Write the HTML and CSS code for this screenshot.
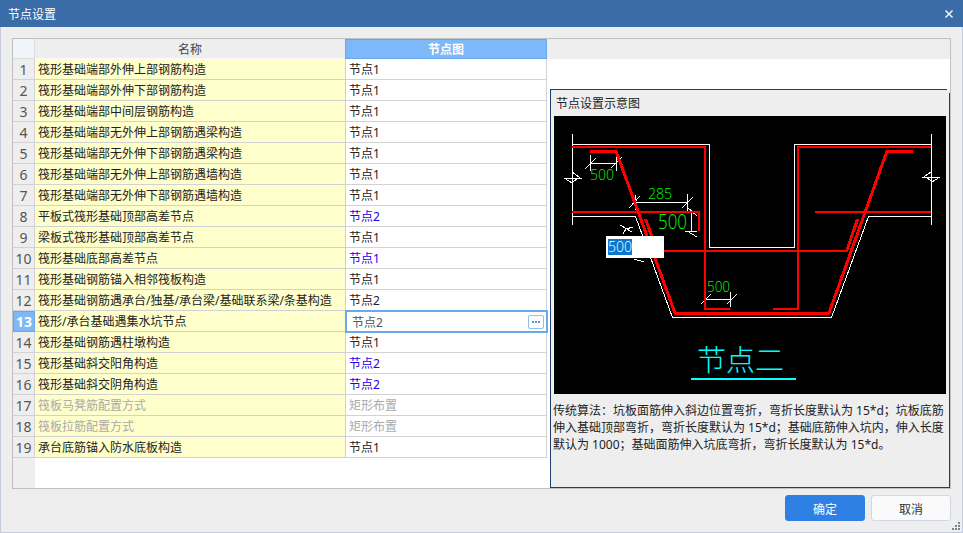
FILE: index.html
```html
<!DOCTYPE html>
<html lang="zh">
<head>
<meta charset="utf-8">
<title>节点设置</title>
<link rel="stylesheet" href="styles.css">
</head>
<body>
<div class="dialog">
  <header class="titlebar">
    <span class="title">节点设置</span>
    <svg class="close" width="8" height="8" viewBox="0 0 8 8"><path d="M0.5 0.5L7.5 7.5M7.5 0.5L0.5 7.5" stroke="#fff" stroke-width="1.4" fill="none"/></svg>
  </header>
  <main class="content">
    <div class="frame">
      <div class="grid">
        <div class="cell corner"></div>
        <div class="cell head">名称</div>
        <div class="cell head head-active">节点图</div>

        <div class="cell num">1</div><div class="cell name">筏形基础端部外伸上部钢筋构造</div><div class="cell val">节点1</div>
        <div class="cell num">2</div><div class="cell name">筏形基础端部外伸下部钢筋构造</div><div class="cell val">节点1</div>
        <div class="cell num">3</div><div class="cell name">筏形基础端部中间层钢筋构造</div><div class="cell val">节点1</div>
        <div class="cell num">4</div><div class="cell name">筏形基础端部无外伸上部钢筋遇梁构造</div><div class="cell val">节点1</div>
        <div class="cell num">5</div><div class="cell name">筏形基础端部无外伸下部钢筋遇梁构造</div><div class="cell val">节点1</div>
        <div class="cell num">6</div><div class="cell name">筏形基础端部无外伸上部钢筋遇墙构造</div><div class="cell val">节点1</div>
        <div class="cell num">7</div><div class="cell name">筏形基础端部无外伸下部钢筋遇墙构造</div><div class="cell val">节点1</div>
        <div class="cell num">8</div><div class="cell name">平板式筏形基础顶部高差节点</div><div class="cell val changed">节点2</div>
        <div class="cell num">9</div><div class="cell name">梁板式筏形基础顶部高差节点</div><div class="cell val">节点1</div>
        <div class="cell num">10</div><div class="cell name">筏形基础底部高差节点</div><div class="cell val changed">节点1</div>
        <div class="cell num">11</div><div class="cell name">筏形基础钢筋锚入相邻筏板构造</div><div class="cell val">节点1</div>
        <div class="cell num">12</div><div class="cell name">筏形基础钢筋遇承台/独基/承台梁/基础联系梁/条基构造</div><div class="cell val">节点2</div>
        <div class="cell num num-active">13</div><div class="cell name">筏形/承台基础遇集水坑节点</div>
        <div class="cell val editing"><span>节点2</span><span class="more"><i></i><i></i><i></i></span></div>
        <div class="cell num">14</div><div class="cell name">筏形基础钢筋遇柱墩构造</div><div class="cell val">节点1</div>
        <div class="cell num">15</div><div class="cell name">筏形基础斜交阳角构造</div><div class="cell val changed">节点2</div>
        <div class="cell num">16</div><div class="cell name">筏形基础斜交阴角构造</div><div class="cell val changed">节点2</div>
        <div class="cell num">17</div><div class="cell name muted">筏板马凳筋配置方式</div><div class="cell val muted">矩形布置</div>
        <div class="cell num">18</div><div class="cell name muted">筏板拉筋配置方式</div><div class="cell val muted">矩形布置</div>
        <div class="cell num">19</div><div class="cell name">承台底筋锚入防水底板构造</div><div class="cell val">节点1</div>
        <div class="cell-rest"></div>
      </div>
      <aside class="side">
        <div class="side-head"></div>
        <div class="side-gap"></div>
        <section class="panel">
          <div class="panel-line"></div>
          <div class="panel-body">
            <div class="panel-title">节点设置示意图</div>
            <svg class="drawing" width="392" height="278" viewBox="554 116 392 278">
              <g class="white">
                <path d="M572.5 134V225M931.5 134V225"/>
                <path d="M572 144.5H709.5V247.5H794.5V144.5H931"/>
                <path d="M572 216.5H635.5L672.5 317.5H831.5L868.5 216.5H931"/>
                <path d="M572 172L581 178.5H565L572 183L577 178.5"/>
                <path d="M931 172L923 177.5H939L932 182L927 177.5"/>
                <path d="M590.5 155V171M616 157V171M590 163.5H616M585 169L596 158M611 168L622 157"/>
                <path d="M635.5 195V210M687.5 194V212M635 202.5H687M629 208L640 196M682 208L693 197"/>
                <path d="M691.5 210V231M685 231.5H697M687 207L697 216M687 231L697 237"/>
                <path d="M705 299.5H730M730.5 292V307M701 304L711 294M727 304L737 294"/>
                <path d="M620 225L632 232M626 229L623 234M626 229L633 227"/>
                <path d="M634 259L644 262"/>
              </g>
              <g class="red">
                <path d="M572 147H705V309H730"/>
                <path d="M931 147H798V309H773"/>
                <path d="M572 212H699V231"/>
                <path d="M656 251H848"/>
                <path d="M815 212H931"/>
              </g>
              <g class="red thick">
                <path d="M590 151H616L675 313H829L887 151H913"/>
                <path d="M645.5 219L657 251M857.5 219L847 250"/>
              </g>
              <text class="dim" x="590" y="180" textLength="24" lengthAdjust="spacingAndGlyphs">500</text>
              <text class="dim" x="648" y="199" textLength="24" lengthAdjust="spacingAndGlyphs">285</text>
              <text class="dim large" x="658" y="229" textLength="29" lengthAdjust="spacingAndGlyphs">500</text>
              <text class="dim" x="707" y="292" textLength="23" lengthAdjust="spacingAndGlyphs">500</text>
              <rect x="606" y="236" width="58" height="22" fill="#fff"/>
              <rect x="608" y="239" width="24" height="16" fill="#0b78d0"/>
              <text class="selected" x="608" y="252" textLength="24" lengthAdjust="spacingAndGlyphs">500</text>
              <text class="node-title" x="697" y="371">节点二</text>
              <rect x="691" y="378" width="105" height="2" fill="#00ffff"/>
            </svg>
            <p class="desc">传统算法：坑板面筋伸入斜边位置弯折，弯折长度默认为 15*d；坑板底筋伸入基础顶部弯折，弯折长度默认为 15*d；基础底筋伸入坑内，伸入长度默认为 1000；基础面筋伸入坑底弯折，弯折长度默认为 15*d。</p>
          </div>
        </section>
      </aside>
    </div>
    <footer class="footer">
      <button class="btn primary" type="button">确定</button>
      <button class="btn" type="button">取消</button>
    </footer>
  </main>
  <svg class="grip" width="9" height="9" viewBox="0 0 9 9" fill="#7a8594"><rect x="6" y="0" width="2" height="2"/><rect x="3" y="3" width="2" height="2"/><rect x="6" y="3" width="2" height="2"/><rect x="0" y="6" width="2" height="2"/><rect x="3" y="6" width="2" height="2"/><rect x="6" y="6" width="2" height="2"/></svg>
</div>
</body>
</html>
```
FILE: styles.css
```css
* { box-sizing: border-box; }
html, body { margin: 0; padding: 0; }
body {
  width: 963px;
  height: 533px;
  overflow: hidden;
  font-family: "Noto Sans", "Noto Sans CJK SC", sans-serif;
  font-size: 12px;
  color: #222;
}
.dialog {
  position: relative;
  width: 963px;
  height: 533px;
  display: flex;
  flex-direction: column;
  background: #eeeeee;
  border: solid #c3cbdc;
  border-width: 0 1px 1px 1px;
}
.titlebar {
  flex: none;
  height: 27px;
  margin: 0 -1px;
  padding: 0 10px 0 8px;
  display: flex;
  align-items: center;
  justify-content: space-between;
  background: #3a6ca8;
  color: #fff;
  font-family: "Noto Sans CJK SC", sans-serif;
}
.title { line-height: 27px; }
.close { display: block; }
.content {
  flex: 1;
  display: flex;
  flex-direction: column;
  padding: 11px 11px 0 11px;
}
.frame {
  width: 939px;
  height: 451px;
  display: flex;
  border: 1px solid #c0c0c0;
  background: #fff;
}
.grid {
  width: 534px;
  flex: none;
  display: grid;
  grid-template-columns: 22px 311px 201px;
  grid-auto-rows: 21px;
  grid-template-rows: 20px repeat(19, 21px) 1fr;
}
.cell {
  display: flex;
  align-items: center;
  border-right: 1px solid #d2d2d2;
  border-bottom: 1px solid #d2d2d2;
  padding-left: 3px;
  white-space: nowrap;
  font-family: "Noto Sans", "Noto Sans CJK SC", sans-serif;
}
.corner { background: #f1f4f8; border-color: #dadde2; }
.head {
  justify-content: center;
  padding: 0;
  background: #eeeeee;
  border-bottom-color: #fafafa;
  color: #444;
}
.head-active {
  margin-left: -1px;
  background: #7db8f8;
  border: 1px solid #68a8ea;
  color: #fff;
  font-weight: 700;
}
.num {
  justify-content: center;
  padding: 0;
  background: #eeeeee;
  color: #555;
  font-size: 14px;
}
.num-active {
  background: #7db8f8;
  border: 1px solid #68a8ea;
  color: #fff;
  font-weight: 700;
}
.name { background: #ffffcc; color: #222; }
.val { background: #fff; color: #222; }
.changed { color: #2200ee; }
.muted { color: #aaaaaa; }
.editing {
  position: relative;
  z-index: 1;
  justify-content: space-between;
  padding: 0 3px 0 6px;
  border: none;
  color: #555;
  box-shadow: 0 0 0 1px #6aaae8, inset 0 0 0 1px #6aaae8;
}
.more {
  width: 16px;
  height: 14px;
  display: flex;
  align-items: center;
  justify-content: center;
  gap: 1px;
  background: #fff;
  border: 1px solid #8fc0f0;
  border-radius: 2px;
}
.more i {
  display: block;
  width: 2px;
  height: 2px;
  background: #5b95d8;
}
.cell-rest {
  grid-column: 1 / -1;
  background: linear-gradient(to right, #eeeeee 22px, #fff 22px);
}
.side {
  flex: 1;
  display: flex;
  flex-direction: column;
  min-width: 0;
}
.side-head { flex: none; height: 20px; background: #eeeeee; }
.side-gap { flex: none; height: 30px; background: #fff; }
.panel {
  position: relative;
  flex: 1;
  display: flex;
  flex-direction: column;
  margin-left: 3px;
  border-left: 1px solid #1f3f73;
  border-bottom: 1px solid #1f3f73;
}
.panel::after {
  content: "";
  position: absolute;
  top: 4px;
  right: 0;
  bottom: 0;
  width: 1px;
  background: #1f3f73;
}
.panel-line { flex: none; height: 1px; margin-right: 3px; background: #1f3f73; }
.panel-body {
  flex: 1;
  display: flex;
  flex-direction: column;
  background: #eeeeee;
  padding-left: 3px;
}
.panel-title {
  height: 26px;
  line-height: 26px;
  padding-left: 2px;
  font-family: "Noto Sans CJK SC", sans-serif;
  color: #222;
}
.drawing { display: block; background: #000; }
.white path { fill: none; stroke: #fff; stroke-width: 1; shape-rendering: crispEdges; }
.red path { fill: none; stroke: #ff0000; stroke-width: 2; shape-rendering: crispEdges; }
.thick path { stroke-width: 3; }
.dim {
  font-family: "Open Sans", "Liberation Sans", sans-serif;
  font-size: 15px;
  font-weight: 300;
  fill: #00ff00;
}
.large { font-size: 20px; }
.selected {
  font-family: "Open Sans", "Liberation Sans", sans-serif;
  font-size: 15px;
  font-weight: 300;
  fill: #fff;
}
.node-title {
  font-family: "Noto Sans CJK SC", sans-serif;
  font-size: 29px;
  font-weight: 300;
  fill: #00ffff;
}
.desc {
  width: 394px;
  margin: 0;
  margin-left: -1px;
  padding-top: 8px;
  line-height: 17px;
  font-size: 12px;
  color: #222;
  font-family: "Noto Sans", "Noto Sans CJK SC", sans-serif;
}
.footer {
  flex: none;
  display: flex;
  justify-content: flex-end;
  gap: 6px;
  padding-top: 6px;
}
.btn {
  width: 80px;
  height: 26px;
  padding: 0;
  border: 1px solid #d0d8e4;
  border-radius: 3px;
  background: #fafafa;
  color: #333;
  font-family: "Noto Sans CJK SC", sans-serif;
  font-size: 12px;
}
.primary {
  background: #2f80e4;
  border-color: #2f80e4;
  color: #fff;
}
.grip {
  position: absolute;
  right: 1px;
  bottom: 1px;
}
```
